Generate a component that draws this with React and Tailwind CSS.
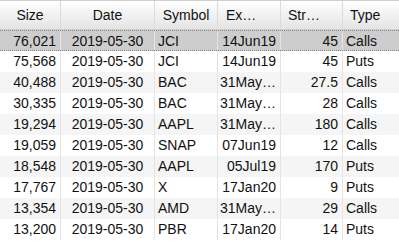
const columns = [
  { key: 'size', title: 'Size', width: 'w-[61px]', align: 'text-right pr-[4px]', head: 'justify-center' },
  { key: 'date', title: 'Date', width: 'w-[94px]', align: 'text-center', head: 'justify-center' },
  { key: 'symbol', title: 'Symbol', width: 'w-[63px]', align: 'text-left pl-[3px]', head: 'justify-center' },
  { key: 'expiration', title: 'Ex…', width: 'w-[63px]', align: 'text-right pr-[4px]', head: 'justify-start pl-[8px]' },
  { key: 'strike', title: 'Str…', width: 'w-[62px]', align: 'text-right pr-[4px]', head: 'justify-start pl-[7px]' },
  { key: 'type', title: 'Type', width: 'w-[70px]', align: 'text-left pl-[3px]', head: 'justify-start pl-[7px]' },
];

const rows = [
  ['76,021', '2019-05-30', 'JCI', '14Jun19', '45', 'Calls'],
  ['75,568', '2019-05-30', 'JCI', '14Jun19', '45', 'Puts'],
  ['40,488', '2019-05-30', 'BAC', '31May…', '27.5', 'Calls'],
  ['30,335', '2019-05-30', 'BAC', '31May…', '28', 'Calls'],
  ['19,294', '2019-05-30', 'AAPL', '31May…', '180', 'Calls'],
  ['19,059', '2019-05-30', 'SNAP', '07Jun19', '12', 'Calls'],
  ['18,548', '2019-05-30', 'AAPL', '05Jul19', '170', 'Puts'],
  ['17,767', '2019-05-30', 'X', '17Jan20', '9', 'Puts'],
  ['13,354', '2019-05-30', 'AMD', '31May…', '29', 'Calls'],
  ['13,200', '2019-05-30', 'PBR', '17Jan20', '14', 'Puts'],
];

export default function App() {
  return (
    <div className="w-[399px] h-[242px] overflow-hidden bg-white text-[14px] text-[#111] font-['Liberation_Sans',Arial,sans-serif]">
      {/* header */}
      <div className="flex w-max h-[30px] border-t border-b border-[#cfcfcf] bg-gradient-to-b from-white to-[#e4e4e4]">
        {columns.map((col) => (
          <div
            key={col.key}
            className={`${col.width} ${col.head} shrink-0 flex items-center whitespace-nowrap overflow-hidden border-r border-[#dcdcdc]`}
          >
            {col.title}
          </div>
        ))}
      </div>

      {/* body */}
      {rows.map((row, i) => {
        const selected = i === 0;
        const bg = selected ? 'bg-[#cdcdcd]' : i % 2 === 0 ? 'bg-[#f5f5f5]' : 'bg-white';
        return (
          <div
            key={i}
            className={`flex w-max h-[21px] leading-[21px] ${bg} ${selected ? 'border-y border-dotted border-[#8a8a8a] leading-[19px]' : ''}`}
          >
            {row.map((cell, j) => (
              <div
                key={j}
                className={`${columns[j].width} ${columns[j].align} shrink-0 border-r border-[#e4e4e4] whitespace-nowrap overflow-hidden`}
              >
                {cell}
              </div>
            ))}
          </div>
        );
      })}
    </div>
  );
}
